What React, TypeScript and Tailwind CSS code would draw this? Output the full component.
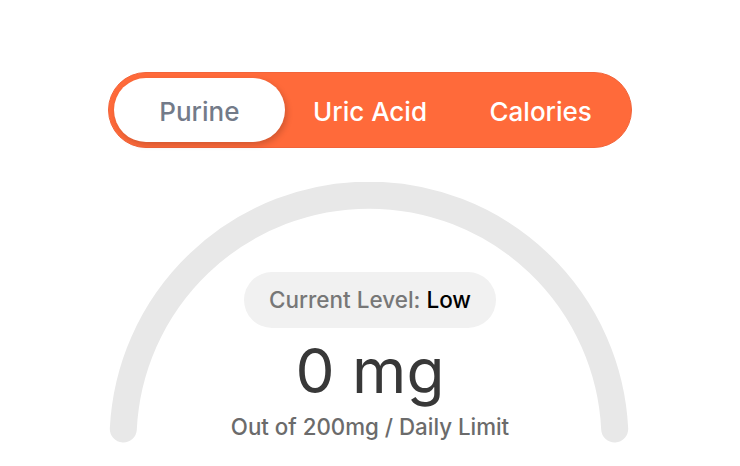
import React from "react";

export default function App() {
  return (
    <div className="w-[740px] h-[466px] bg-white flex flex-col items-center pt-[72px] font-['Inter',sans-serif] overflow-hidden">
      <div className="w-[524px] h-[76px] rounded-full bg-[#ff6a3a] border border-[#f2643a] p-[5px] flex">
        <button className="flex-1 rounded-full bg-white text-[#737b89] text-[26px] font-medium pt-[2px] shadow-[2px_3px_6px_rgba(0,0,0,0.18)]">
          Purine
        </button>
        <button className="flex-1 rounded-full text-white text-[26px] font-medium pt-[2px]">
          Uric Acid
        </button>
        <button className="flex-1 rounded-full text-white text-[26px] font-medium pt-[2px]">
          Calories
        </button>
      </div>
      <div className="relative w-[740px] h-[284px] mt-[34px]">
        <svg className="absolute inset-0" width="740" height="284" viewBox="0 0 740 284">
          <path
            d="M 123.3 247 A 246 246 0 0 1 614.7 247"
            fill="none"
            stroke="#e8e8e8"
            strokeWidth="27"
            strokeLinecap="round"
          />
        </svg>
        <div className="relative flex flex-col items-center pt-[90px]">
          <div className="h-[56px] px-[25px] rounded-full bg-[#f1f1f1] flex items-center text-[22.5px] font-medium">
            <span className="text-[#777777]">Current Level:&nbsp;</span>
            <span className="text-black">Low</span>
          </div>
          <div className="mt-[12px] text-[62px] leading-[62px] text-[#383838]">0 mg</div>
          <div className="mt-[14px] text-[22.3px] leading-[22px] font-medium text-[#6b6b6b]">
            Out of 200mg / Daily Limit
          </div>
        </div>
      </div>
    </div>
  );
}
